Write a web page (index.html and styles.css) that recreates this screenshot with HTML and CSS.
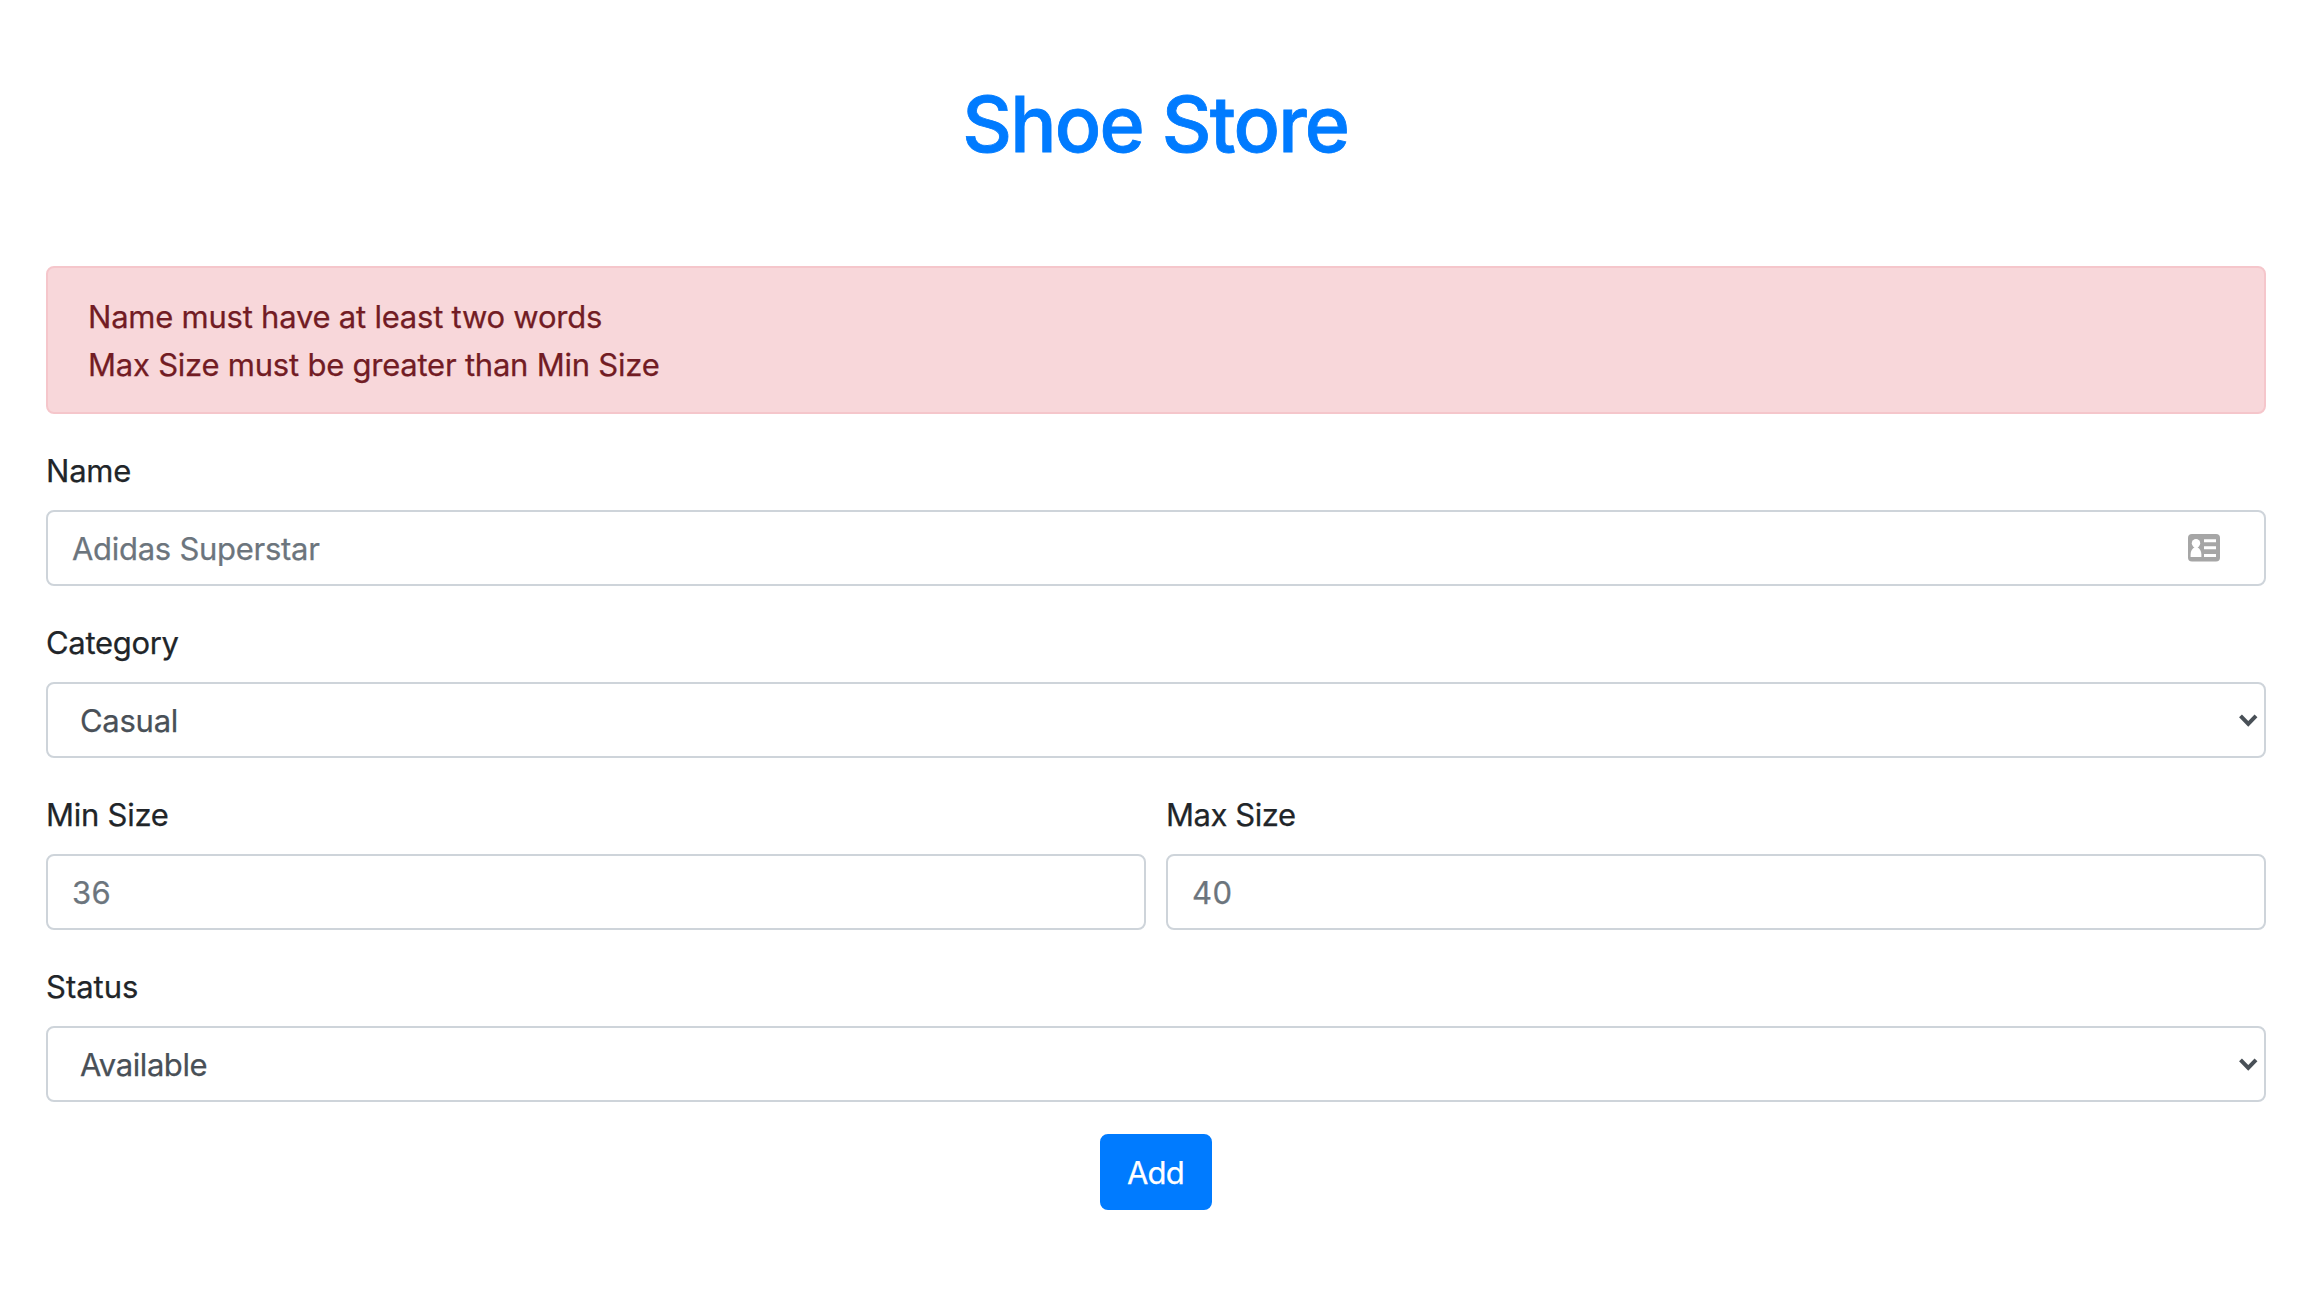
FILE: index.html
```
<!DOCTYPE html>
<html lang="en">
<head>
<meta charset="utf-8">
<title>Shoe Store</title>
<link rel="stylesheet" href="styles.css">
</head>
<body>
<main class="container">
  <h1 class="title">Shoe Store</h1>
  <div class="alert">
    <div>Name must have at least two words</div>
    <div>Max Size must be greater than Min Size</div>
  </div>
  <form class="form">
    <div class="group">
      <label class="label label-name" for="name">Name</label>
      <div class="field">
        <input class="control control-name" id="name" type="text" placeholder="Adidas Superstar">
        <svg class="card-icon" width="32" height="28" viewBox="0 0 32 28">
          <rect width="32" height="27.5" rx="4" fill="#a6a6a6"/>
          <circle cx="8" cy="9.2" r="4.2" fill="#fff"/>
          <path d="M2.6 23V20.5C2.6 17 4.4 14.5 6.4 13.2V12H9.6V13.2C11.6 14.5 13.4 17 13.4 20.5V23Z" fill="#fff"/>
          <path d="M16 5.2H28V8.2H16ZM16 12.2H28V15.3H16ZM16 20H28V23H16Z" fill="#fff"/>
        </svg>
      </div>
    </div>
    <div class="group">
      <label class="label label-category" for="category">Category</label>
      <div class="field">
        <select class="control select" id="category"><option>Casual</option></select>
        <svg class="chevron" width="19" height="13" viewBox="0 0 19 13"><path d="M1.5 1.8L9.25 9.8L17 1.8" fill="none" stroke="#495057" stroke-width="4"/></svg>
      </div>
    </div>
    <div class="row">
      <div class="group">
        <label class="label" for="min">Min Size</label>
        <input class="control control-size" id="min" type="text" placeholder="36">
      </div>
      <div class="group">
        <label class="label label-max" for="max">Max Size</label>
        <input class="control control-size" id="max" type="text" placeholder="40">
      </div>
    </div>
    <div class="group">
      <label class="label label-status" for="status">Status</label>
      <div class="field">
        <select class="control select select-status" id="status"><option>Available</option></select>
        <svg class="chevron" width="19" height="13" viewBox="0 0 19 13"><path d="M1.5 1.8L9.25 9.8L17 1.8" fill="none" stroke="#495057" stroke-width="4"/></svg>
      </div>
    </div>
    <button class="button" type="button">Add</button>
  </form>
</main>
</body>
</html>
```
FILE: styles.css
```
* { box-sizing: border-box; }

body {
  margin: 0;
  background: #fff;
  color: #212529;
  font: 400 31px/48px Inter, sans-serif;
  letter-spacing: -0.26px;
  -webkit-text-stroke: 0.25px currentColor;
}

.container { padding: 76px 54px 0 46px; }

.title {
  margin: 0 0 94px;
  color: #007bff;
  font-size: 77px;
  font-weight: 500;
  line-height: 96px;
  letter-spacing: -1.75px;
  text-align: center;
  text-indent: -1.5px;
  -webkit-text-stroke-width: 0.8px;
}

.alert {
  margin-bottom: 32px;
  padding: 25px 40px 23px;
  border: 2px solid #f5c6cb;
  border-radius: 8px;
  background: #f8d7da;
  color: #721c24;
  letter-spacing: -0.23px;
}

.form { display: flex; flex-direction: column; gap: 32px; }
.row { display: flex; gap: 20px; }
.group { display: flex; flex: 1; flex-direction: column; gap: 16px; }

.label { margin: 1px 0 -1px; }
.label-name { letter-spacing: -0.2px; }
.label-category { letter-spacing: -0.3px; }
.label-max { letter-spacing: -0.44px; }
.label-status { letter-spacing: 0; }

.field { position: relative; display: flex; }

.control {
  display: block;
  width: 100%;
  height: 76px;
  margin: 0;
  padding: 12px 24px;
  border: 2px solid #ced4da;
  border-radius: 8px;
  outline: 0;
  background: #fff;
  color: #495057;
  font: inherit;
  letter-spacing: -0.28px;
  appearance: none;
}

.control::placeholder { color: #6c757d; opacity: 1; }
.control-size { letter-spacing: 0.4px; }
.select { padding: 13px 32px 11px; }
.select-status { letter-spacing: -0.42px; }

.card-icon { position: absolute; top: 24px; right: 46px; }
.chevron { position: absolute; top: 32px; right: 8px; }

.button {
  align-self: center;
  width: 112px;
  height: 76px;
  padding: 13px 1px 11px 0;
  border: 2px solid #007bff;
  border-radius: 8px;
  background: #007bff;
  color: #fff;
  font: inherit;
  letter-spacing: -0.8px;
}
```
